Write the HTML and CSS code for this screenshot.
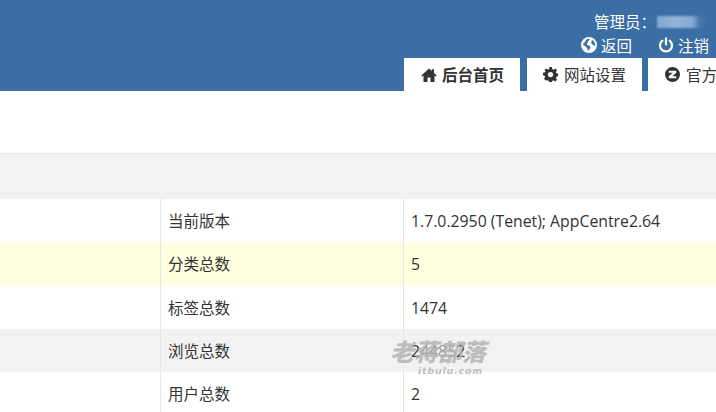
FILE: index.html
```html
<!DOCTYPE html>
<html lang="zh">
<head>
<meta charset="utf-8">
<title>后台首页</title>
<link rel="stylesheet" href="styles.css">
</head>
<body>
<header class="header">
  <div class="user"><span>管理员：</span><span class="blur"></span></div>
  <div class="links">
    <a class="link"><svg class="ico" viewBox="0 0 16 16"><path fill-rule="evenodd" d="M8 0a8 8 0 1 0 0 16A8 8 0 0 0 8 0zM2.2 6.2 4 5.2l.6-2L7 1.8l1.8.4L8 3.6 6.6 4.6 7 6 5.4 6.6 6.8 8.4l2 .3.7 1.7-1.4 2.6-1.3.8-.6-2.6L4.6 9.6 2.4 8zM10.4 2.4l2.6 2 1.2 2.6-.2 2-1.6-1-1.4-.8-1-1.6 1-1.2z"/></svg>返回</a>
    <a class="link"><svg class="ico" viewBox="0 0 16 16"><path fill="none" stroke="currentColor" stroke-width="2.2" stroke-linecap="round" d="M8 1.4v6M4.4 3.6a6 6 0 1 0 7.2 0"/></svg>注销</a>
  </div>
  <nav class="tabs">
    <a class="tab tab-home"><svg class="ico-home" viewBox="0 0 16 16"><path d="M8 1.5 .3 8.400l1 1.100L2.500 8.400V15h4v-4.500h3V15h4V8.400l1.200 1.100 1-1.100-2.700-2.500V2.200h-2.200v1.700z"/></svg>后台首页</a>
    <a class="tab tab-set"><svg class="ico-tab" viewBox="0 0 16 16"><path fill-rule="evenodd" d="M6.600 0h2.800l.4 2.200 1.300.6L13 1.500l2 2-1.300 1.900.6 1.300 2.200.4v2.800l-2.200.4-.6 1.300 1.300 1.900-2 2-1.900-1.300-1.300.6-.4 2.200H6.600l-.4-2.200-1.300-.6L3 14.500l-2-2 1.300-1.900-.6-1.300L0 8.900V6.100l2.200-.4.6-1.300L1.500 3.500l2-2 1.900 1.300 1.300-.6zM8 5.200a2.800 2.800 0 1 0 0 5.600 2.800 2.800 0 0 0 0-5.600z"/></svg>网站设置</a>
    <a class="tab tab-off"><svg class="ico-tab" viewBox="0 0 16 16"><path fill-rule="evenodd" d="M8 0a8 8 0 1 0 0 16A8 8 0 0 0 8 0zM4 4h8v2.200L7.800 9.800H12V12H4V9.800l4.200-3.600H4z"/></svg>官方</a>
  </nav>
</header>
<main class="main">
  <div class="band"></div>
  <div class="head-row"></div>
  <div class="row"><div class="c1"></div><div class="c2">当前版本</div><div class="c3">1.7.0.2950 (Tenet); AppCentre2.64</div></div>
  <div class="row row-yellow"><div class="c1"></div><div class="c2">分类总数</div><div class="c3">5</div></div>
  <div class="row"><div class="c1"></div><div class="c2">标签总数</div><div class="c3">1474</div></div>
  <div class="row row-gray"><div class="c1"></div><div class="c2">浏览总数</div><div class="c3">2<span class="faint">4485</span>2</div></div>
  <div class="row"><div class="c1"></div><div class="c2">用户总数</div><div class="c3">2</div></div>
</main>
<div class="mark"><div class="mark-cn">老蒋部落</div><div class="mark-en">itbulu.com</div></div>
</body>
</html>
```
FILE: styles.css
```css
* { box-sizing: border-box; }
html, body { margin: 0; height: 412px; overflow: hidden; }
body {
  position: relative;
  width: 716px;
  background: #fff;
  color: #333;
  font-family: "Open Sans", "Noto Sans CJK SC", sans-serif;
  font-size: 15.5px;
}
.header {
  height: 91px;
  background: #3a6ea5;
  color: #fff;
  padding-top: 11px;
  display: flex;
  flex-direction: column;
}
.user {
  height: 22px;
  line-height: 22px;
  display: flex;
  padding-left: 594px;
  white-space: nowrap;
}
.blur {
  width: 50px;
  height: 12px;
  margin: 5px 0 0 1px;
  background: linear-gradient(90deg, #7fa6d0, #93b5da 35%, #86acd4 70%, #4a7aad 85%, #3a6ea5);
  filter: blur(1.2px);
}
.links {
  height: 24px;
  display: flex;
  align-items: center;
  padding-left: 581px;
  gap: 26px;
  white-space: nowrap;
}
.link { display: flex; align-items: center; gap: 4px; }
.ico { width: 16px; height: 16px; fill: #fff; color: #fff; }
.tabs {
  margin-top: auto;
  height: 33px;
  display: flex;
  padding-left: 404px;
  gap: 7px;
  flex: none;
  width: 716px;
}
.tab {
  flex: none;
  height: 33px;
  background: #fff;
  color: #333;
  display: flex;
  align-items: center;
  white-space: nowrap;
}
.tab-home { width: 116px; padding-left: 17px; font-weight: 700; }
.tab-set { width: 115px; padding-left: 16px; margin-right: -1px; }
.tab-off { width: 80px; padding-left: 17px; }
.ico-home { width: 16px; height: 16px; fill: #333; margin-right: 5px; }
.ico-tab { width: 15px; height: 15px; fill: #333; margin-right: 6px; }
.band { height: 63px; border-bottom: 1px solid #e4e4e4; }
.head-row { height: 45px; background: #f2f2f2; }
.row {
  display: grid;
  grid-template-columns: 160px 243px 1fr;
  height: 43.3px;
  line-height: 44px;
}
.row-yellow { background: #ffffdf; }
.row-gray { background: #f2f2f2; }
.c2, .c3 { border-left: 1px solid #e6e6e6; padding-left: 7px; white-space: nowrap; }
.c3 { font-size: 15.8px; }
.faint { color: #999; }
.mark {
  position: absolute;
  left: 390px;
  top: 339px;
  width: 96px;
  color: rgba(175, 175, 175, .8);
  font-style: italic;
  font-weight: 900;
  white-space: nowrap;
}
.mark-cn { font-size: 24px; line-height: 26px; }
.mark-en {
  padding-left: 28px;
  font-size: 9.500px;
  line-height: 12px;
  letter-spacing: .8px;
  font-family: "DejaVu Sans", sans-serif;
  font-weight: 700;
}
```
